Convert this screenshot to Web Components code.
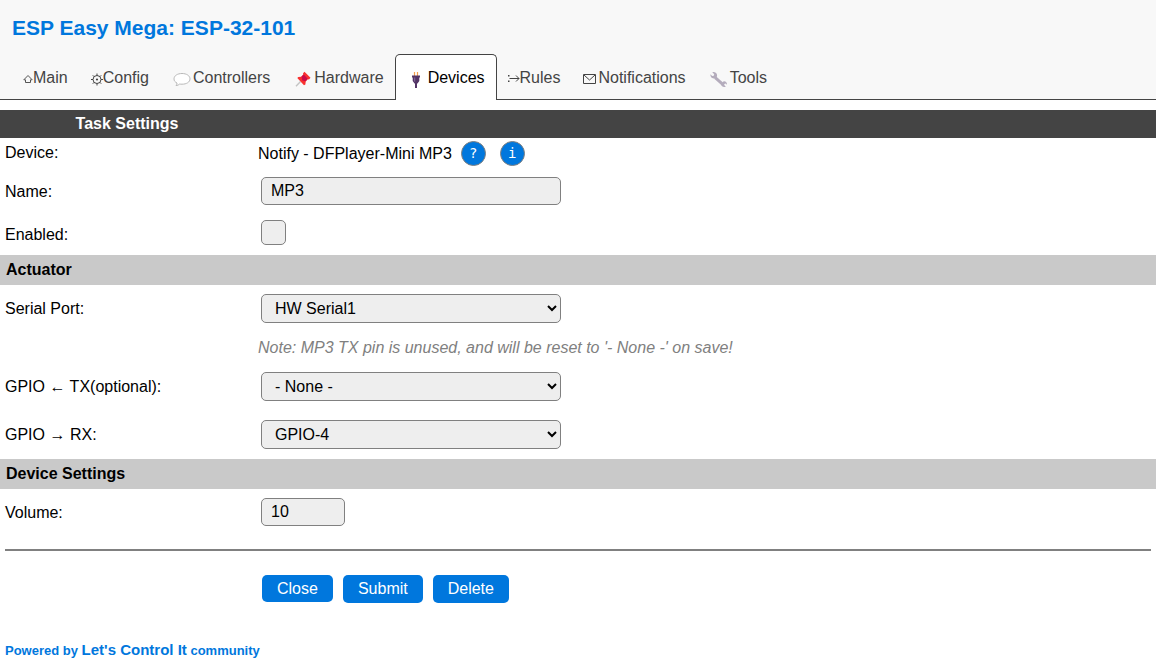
<!DOCTYPE html>
<html lang="en">
<head>
<meta charset="utf-8">
<meta name="viewport" content="width=device-width, initial-scale=1">
<title>ESP-32-101</title>
<style>
  body {
    margin: 0;
    background: #fff;
    color: #000;
    font: 16px/20px "Liberation Sans", Arial, sans-serif;
  }
</style>
</head>
<body>
<esp-page></esp-page>

<script>
const define = (name, render) => customElements.define(name, class extends HTMLElement {
  connectedCallback() {
    if (this.shadowRoot) return;
    this.attachShadow({ mode: 'open' }).innerHTML = render(this);
  }
});

const rowCss = `
  :host { display: block; }
  .row { display: grid; grid-template-columns: 253px 1fr; align-items: center; padding-left: 5px; }
  .control { padding: 9px 3px 10px; }
  input, select {
    display: block; box-sizing: border-box; margin: 0; max-width: 100%;
    font: inherit; color: #000; background: #eee;
    border: 1px solid #808080; border-radius: 5px;
  }`;

/* Tab icons: [width, drawing] on a 20px high canvas */
const icons = {
  home: [10, '<path d="M.8 11.800 5 7.500 9.200 11.800H7.500V14.500H2.500V11.800z" fill="none" stroke="#555"/>'],
  gear: [12, '<g fill="none" stroke="#444"><circle cx="6" cy="11.500" r="4"/><path d="M6 5.500v2M6 15.500v2M0 11.500h2M10 11.500h2M1.800 7.300l1.400 1.400M8.800 14.300l1.400 1.400M1.800 15.700l1.400-1.400M8.800 8.700l1.400-1.400"/></g><circle cx="6" cy="11.500" r="1.100" fill="#444"/>'],
  bubble: [21, '<path d="M10 5.500c4.500 0 8 2.200 8 5.400s-3.500 5.300-8 5.300c-.8 0-1.600 0-2.300-.2-1 .9-2.300 1.500-3.700 1.500.8-.7 1-1.500 1-2.500-1.900-.9-3-2.200-3-4.100 0-3.200 3.500-5.400 8-5.400z" fill="#fff" stroke="#b9b9b9"/>'],
  pin: [21, '<path d="M7.500 13.500 3 18.200" stroke="#c4c4c4" stroke-width="1.400"/><path d="M11.500 3.800 17.500 9.800 16 11.500 14.800 11.200 12.700 13.500 12.400 16.500 11 17.200 4.300 10 5.300 8.900 8.200 8.700 10.300 6.600 10 5.200z" fill="#f8312f"/><path d="M8.500 8.500 10.800 6.500 14.700 10.700 12.500 13.200 9.300 12.500z" fill="#ca0b4a"/>'],
  plug: [21, '<path d="M7.500 4v4M10.500 4v4" stroke="#f3a04e" stroke-width="1.200"/><path d="M5 7.500h8v2h-.7v3.500l-1.800 2.500h-3L5.700 13V9.500H5z" fill="#533566"/><path d="M8 15h2v5H8z" fill="#533566"/><path d="M7.700 9.500v4" stroke="#8b6ca0"/>'],
  rules: [12, '<path d="M0 7h1.500v1.500H0zM0 12.500h1.500V14H0z" fill="#444"/><path d="M1.500 10.500h9.500M8 7.500 11 10.500 8 13.500" fill="none" stroke="#444"/>'],
  mail: [15, '<path d="M.5 6.500h12v9H.5zM1 7l5.500 5L12 7" fill="none" stroke="#444"/>'],
  wrench: [21, '<g transform="translate(-1 -1)"><path d="M7.200 10.700 14 16.700" stroke="#b4acbc" stroke-width="3"/><path d="M4.300 5.300 6.200 7.300 5.800 8.800 4.200 9 2.400 7.300C2.100 9.500 3.700 11.800 6.200 11.500L8.500 11 9.100 8.500C9.200 6.400 6.700 4.500 4.300 5.300z" fill="#b4acbc"/><path d="M17.800 19.700 16.200 18.100 16.400 17 17.500 16.500 19 17.700C19.200 15.800 17.800 14 15.800 14.200L12.800 16.700C12.800 18.800 15 20.500 17.800 19.700z" fill="#b4acbc"/></g>']
};

define('esp-tab', el => {
  const [w, art] = icons[el.getAttribute('icon')];
  return `<style>
    :host { display: block; margin-right: -1px; }
    a {
      display: flex; align-items: flex-start; box-sizing: border-box; height: 45px; padding: 13px 11px 0;
      border: 1px solid transparent; border-bottom: 0; border-radius: 5px 5px 0 0;
      color: #444; text-decoration: none; white-space: nowrap;
    }
    :host([active]) a { height: 46px; background: #fff; border-color: #444; color: #000; }
    svg { flex: none; }
  </style>
  <a href="#"><svg width="${w}" height="20" viewBox="0 0 ${w} 20" overflow="visible" aria-hidden="true">${art}</svg><slot></slot></a>`;
});

define('esp-header', () => `<style>
    :host { display: block; background: #f8f8f8; border-bottom: 1px solid #444; margin-bottom: 10px; }
    h1 { margin: 0; padding: 16px 12px 14px; font-size: 21px; line-height: 24px; color: #0077dd; }
    nav { display: flex; padding-left: 11px; height: 45px; }
  </style>
  <h1><slot name="title"></slot></h1>
  <nav><slot></slot></nav>`);

define('esp-heading', () => `<style>
    :host { display: block; background: #444; color: #fff; }
    h2 { margin: 0; width: 254px; padding: 4px 0; font-size: 16px; line-height: 20px; text-align: center; }
  </style><h2><slot></slot></h2>`);

define('esp-section', () => `<style>
    :host { display: block; background: #c9c9c9; }
    h3 { margin: 0; padding: 5px 6px; font-size: 16px; line-height: 20px; }
  </style><h3><slot></slot></h3>`);

define('esp-info-row', el => `<style>${rowCss}
    .row { height: 30px; }
  </style>
  <div class="row"><span>${el.getAttribute('label')}</span><div><slot></slot></div></div>`);

define('esp-round-button', () => `<style>
    :host { display: inline-block; }
    button {
      display: block; box-sizing: border-box; width: 25px; height: 25px; padding: 0;
      border: 1px solid #808080; border-radius: 50%; background: #0077dd; color: #fff;
      font: 14px/22px "DejaVu Sans Mono", monospace;
    }
  </style><button type="button"><slot></slot></button>`);

define('esp-device', () => `<style>
    :host { display: flex; align-items: center; }
    .name { padding-top: 1px; }
    .help { margin: 0 14px 0 9px; }
  </style><span class="name"><slot></slot></span><esp-round-button class="help">?</esp-round-button><esp-round-button>i</esp-round-button>`);

define('esp-input', el => `<style>${rowCss}
    input { width: ${el.getAttribute('type') === 'number' ? '84px' : '300px'}; height: 28px; padding: 0 9px; }
  </style>
  <div class="row"><label for="f">${el.getAttribute('label')}</label>
  <div class="control"><input id="f" type="${el.getAttribute('type') || 'text'}" value="${el.getAttribute('value')}"></div></div>`);

define('esp-check', el => `<style>${rowCss}
    .control { padding: 5px 3px 10px; }
    input { appearance: none; width: 25px; height: 25px; }
    input:checked { background: #0077dd; }
  </style>
  <div class="row"><label for="f">${el.getAttribute('label')}</label>
  <div class="control"><input id="f" type="checkbox"></div></div>`);

define('esp-select', el => `<style>${rowCss}
    select { width: 300px; height: 29px; padding: 0 1px 0 9px; }
  </style>
  <div class="row"><label for="f">${el.getAttribute('label')}</label>
  <div class="control"><select id="f"><option>${el.getAttribute('value')}</option></select></div></div>`);

define('esp-actions', () => `<style>
    :host { display: block; margin: 13px 5px 0; border-top: 2px solid #808080; padding: 24px 0 0 257px; }
    div { display: flex; align-items: flex-start; gap: 10px; }
    a, button {
      display: block; box-sizing: border-box; margin: 0; border: 0; border-radius: 5px;
      background: #0077dd; color: #fff; font: inherit; text-decoration: none;
    }
    a { padding: 4px 15px 3px; }
    button { padding: 4px 15px; }
  </style>
  <div><a href="#">Close</a><button type="submit">Submit</button><button type="button">Delete</button></div>`);

define('esp-footer', () => `<style>
    :host { display: block; padding: 37px 5px 3px; font-size: 13px; font-weight: bold; color: #0077dd; }
    a { color: inherit; text-decoration: none; }
    span { font-size: 15px; }
  </style>
  <a href="#">Powered by <span>Let's Control It</span> community</a>`);

define('esp-page', () => `<style>
    :host { display: block; }
    .note { color: #808080; font-style: italic; }
  </style>
  <esp-header>
    <span slot="title">ESP Easy Mega: ESP-32-101</span>
    <esp-tab icon="home">Main</esp-tab>
    <esp-tab icon="gear">Config</esp-tab>
    <esp-tab icon="bubble">Controllers</esp-tab>
    <esp-tab icon="pin">Hardware</esp-tab>
    <esp-tab icon="plug" active>Devices</esp-tab>
    <esp-tab icon="rules">Rules</esp-tab>
    <esp-tab icon="mail">Notifications</esp-tab>
    <esp-tab icon="wrench">Tools</esp-tab>
  </esp-header>
  <main>
    <esp-heading>Task Settings</esp-heading>
    <esp-info-row label="Device:"><esp-device>Notify - DFPlayer-Mini MP3</esp-device></esp-info-row>
    <esp-input label="Name:" value="MP3"></esp-input>
    <esp-check label="Enabled:"></esp-check>
    <esp-section>Actuator</esp-section>
    <esp-select label="Serial Port:" value="HW Serial1"></esp-select>
    <esp-info-row label=""><span class="note">Note: MP3 TX pin is unused, and will be reset to '- None -' on save!</span></esp-info-row>
    <esp-select label="GPIO ← TX(optional):" value="- None -"></esp-select>
    <esp-select label="GPIO → RX:" value="GPIO-4"></esp-select>
    <esp-section>Device Settings</esp-section>
    <esp-input label="Volume:" type="number" value="10"></esp-input>
    <esp-actions></esp-actions>
  </main>
  <esp-footer></esp-footer>`);
</script>
</body>
</html>
